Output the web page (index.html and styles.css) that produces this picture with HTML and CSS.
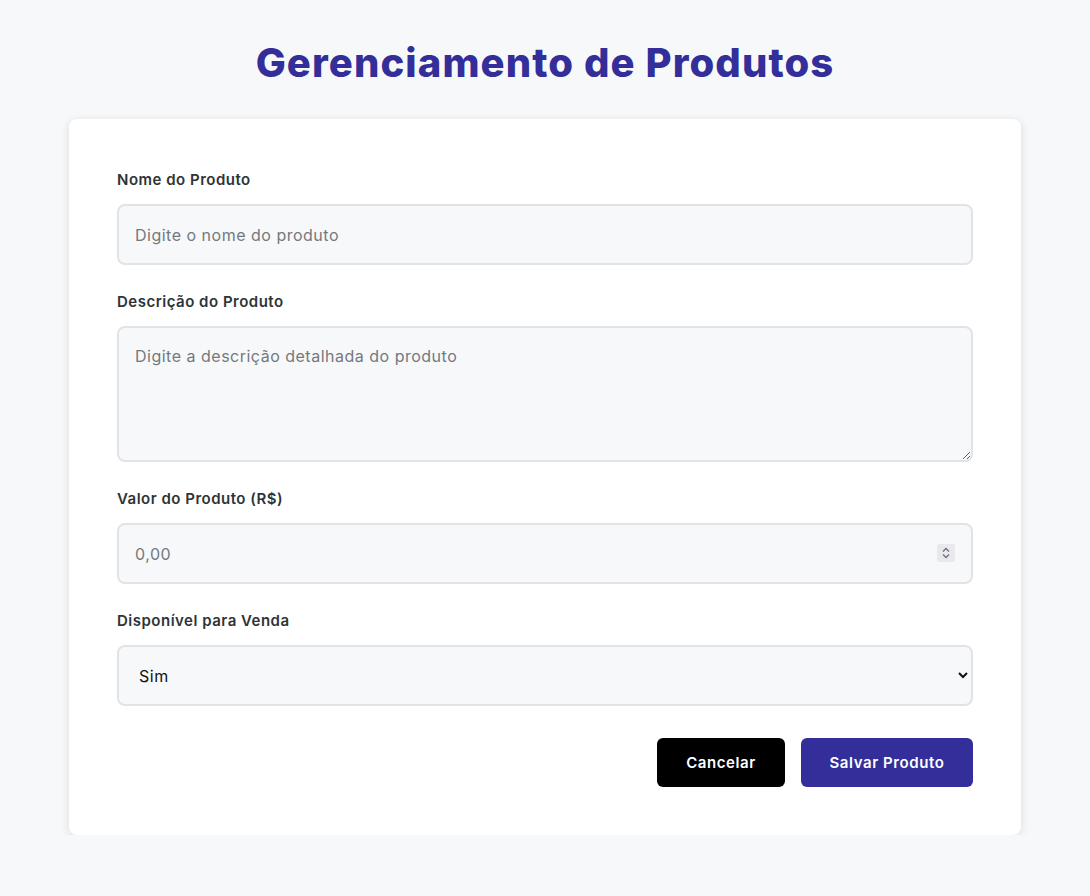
FILE: index.html
```html
<!DOCTYPE html>
<html lang="pt-BR">
<head>
<meta charset="utf-8">
<title>Gerenciamento de Produtos</title>
<link rel="stylesheet" href="styles.css">
</head>
<body>
<main class="page">
  <h1 class="title">Gerenciamento de Produtos</h1>
  <form class="card">
    <div class="group">
      <label class="label" for="nome">Nome do Produto</label>
      <input class="field" id="nome" type="text" placeholder="Digite o nome do produto">
    </div>
    <div class="group">
      <label class="label" for="desc">Descrição do Produto</label>
      <textarea class="field area" id="desc" placeholder="Digite a descrição detalhada do produto"></textarea>
    </div>
    <div class="group">
      <label class="label" for="valor">Valor do Produto (R$)</label>
      <div class="num-wrap">
        <input class="field" id="valor" type="number" placeholder="0,00">
        <span class="spin" aria-hidden="true">
          <svg width="18" height="18" viewBox="0 0 18 18"><path d="M6 7.5 9 4.5l3 3M6 10.5 9 13.5l3-3" fill="none" stroke="#6e6e78" stroke-width="1.3"/></svg>
        </span>
      </div>
    </div>
    <div class="group">
      <label class="label" for="disp">Disponível para Venda</label>
      <select class="field" id="disp">
        <option>Sim</option>
        <option>Não</option>
      </select>
    </div>
    <div class="actions">
      <button type="button" class="btn btn-cancel">Cancelar</button>
      <button type="button" class="btn btn-save">Salvar Produto</button>
    </div>
  </form>
</main>
</body>
</html>
```
FILE: styles.css
```css
* { box-sizing: border-box; }
html, body { margin: 0; padding: 0; }
body {
  background: #f7f8fa;
  font-family: "Inter", "Open Sans", sans-serif;
  color: #2d3436;
}
.page {
  width: 952px;
  margin: 0 auto;
  padding-top: 38px;
}
.title {
  margin: 0 0 31px;
  text-align: center;
  font-size: 40px;
  line-height: 50px;
  font-weight: 800;
  color: #332e99;
  letter-spacing: 1.1px;
}
.card {
  background: #fff;
  border-radius: 8px;
  box-shadow: 0 2px 10px rgba(0,0,0,0.12);
  padding: 50px 48px 48px;
  display: flex;
  flex-direction: column;
  gap: 26px;
}
.group {
  display: flex;
  flex-direction: column;
  gap: 13px;
}
.label {
  font-size: 15px;
  line-height: 22px;
  font-weight: 600;
  color: #2d3436;
  letter-spacing: 0.5px;
}
.field {
  display: block;
  width: 100%;
  height: 61px;
  padding: 0 16px;
  border: 2px solid #e1e3e6;
  border-radius: 8px;
  background: #f7f8fa;
  font-family: inherit;
  font-size: 16px;
  letter-spacing: 0.5px;
  color: #111;
  outline: none;
}
.field::placeholder { color: #74787e; }
.area {
  height: 136px;
  padding: 16px;
  line-height: 24px;
  resize: vertical;
}
select.field { color: #111; }
.num-wrap { position: relative; }
.num-wrap input::-webkit-inner-spin-button,
.num-wrap input::-webkit-outer-spin-button { -webkit-appearance: none; margin: 0; }
.num-wrap input { -moz-appearance: textfield; }
.spin {
  position: absolute;
  right: 18px;
  top: 21px;
  width: 18px;
  height: 18px;
  background: #e9e9ed;
  border-radius: 2px;
  pointer-events: none;
}
.spin svg { display: block; }
.actions {
  display: flex;
  justify-content: flex-end;
  gap: 16px;
  margin-top: 6px;
}
.btn {
  height: 49px;
  border: none;
  border-radius: 6px;
  padding: 0;
  font-family: inherit;
  font-size: 15px;
  font-weight: 600;
  letter-spacing: 0.6px;
  color: #fff;
  cursor: pointer;
}
.btn-cancel { background: #000; width: 128px; }
.btn-save { background: #332e99; width: 172px; }
```
